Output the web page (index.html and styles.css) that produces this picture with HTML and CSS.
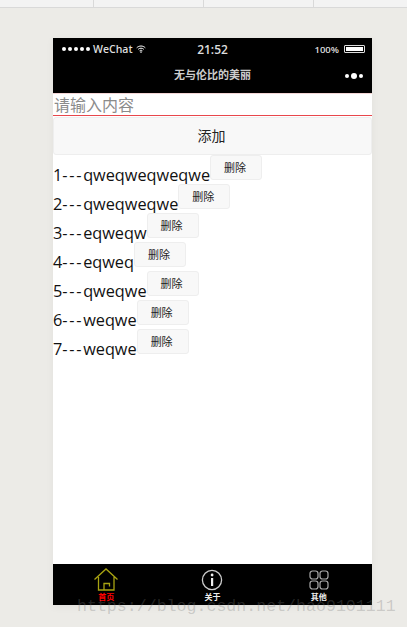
FILE: index.html
```html
<!DOCTYPE html>
<html lang="zh-CN">
<head>
    <meta charset="UTF-8">
    <meta name="viewport" content="width=device-width, initial-scale=1.0">
    <title>无与伦比的美丽</title>
    <link rel="stylesheet" href="styles.css">
</head>
<body>
    <div class="top-tabs">
        <div class="top-tab first"></div>
        <div class="top-tab"></div>
        <div class="top-tab"></div>
        <div class="top-tab"></div>
    </div>

    <div class="phone">
        <div class="status-bar">
            <div class="status-left">
                <span class="signal"><i></i><i></i><i></i><i></i><i></i></span>
                <span>WeChat</span>
                <svg class="wifi" width="10" height="8" viewBox="0 0 10 8">
                    <path d="M.7 2.8C3.2.4 6.8.4 9.3 2.8M2.2 4.3c1.7-1.5 3.9-1.5 5.6 0M3.6 5.8c.9-.7 1.9-.7 2.8 0" fill="none" stroke="#fff" stroke-width="1"/>
                    <circle cx="5" cy="7.1" r=".8" fill="#fff"/>
                </svg>
            </div>
            <div class="status-time">21:52</div>
            <div class="status-right">
                <span>100%</span>
                <span class="battery"><b></b></span>
            </div>
        </div>
        <div class="nav-bar">
            <span class="nav-title">无与伦比的美丽</span>
            <span class="nav-dots"><i></i><i class="big"></i><i></i></span>
        </div>

        <div class="input-row">请输入内容</div>
        <div class="add-btn">添加</div>

        <div class="list">
            <div class="item">1<span class="dash">---</span>qweqweqweqwe<span class="del-btn">删除</span></div>
            <div class="item">2<span class="dash">---</span>qweqweqwe<span class="del-btn">删除</span></div>
            <div class="item">3<span class="dash">---</span>eqweqw<span class="del-btn">删除</span></div>
            <div class="item">4<span class="dash">---</span>eqweq<span class="del-btn">删除</span></div>
            <div class="item">5<span class="dash">---</span>qweqwe<span class="del-btn">删除</span></div>
            <div class="item">6<span class="dash">---</span>weqwe<span class="del-btn">删除</span></div>
            <div class="item">7<span class="dash">---</span>weqwe<span class="del-btn">删除</span></div>
        </div>

        <div class="tab-bar">
            <div class="tab-item active">
                <svg width="26" height="24" viewBox="0 0 26 24">
                    <path d="M1.500 11.500 13 1 24.500 11.500M5.500 9V22H21V9M11 22V15.500H16.500V18.500" fill="none" stroke="#a8a312" stroke-width="1.300"/>
                </svg>
                <span>首页</span>
            </div>
            <div class="tab-item">
                <svg width="22" height="22" viewBox="0 0 22 22">
                    <circle cx="11" cy="11" r="9.600" fill="none" stroke="#ccc" stroke-width="1.300"/>
                    <rect x="10" y="9" width="2.200" height="8" fill="#eee"/>
                    <circle cx="11.100" cy="6" r="1.400" fill="#eee"/>
                </svg>
                <span>关于</span>
            </div>
            <div class="tab-item">
                <svg width="22" height="22" viewBox="0 0 22 22">
                    <rect x="2" y="2" width="8" height="8" rx="2.500" fill="none" stroke="#aaa" stroke-width="1.200"/>
                    <rect x="12" y="2" width="8" height="8" rx="2.500" fill="none" stroke="#aaa" stroke-width="1.200"/>
                    <rect x="2" y="12" width="8" height="8" rx="2.500" fill="none" stroke="#aaa" stroke-width="1.200"/>
                    <rect x="12" y="12" width="8" height="8" rx="2.500" fill="none" stroke="#aaa" stroke-width="1.200"/>
                </svg>
                <span>其他</span>
            </div>
        </div>
    </div>

    <div class="watermark">https://blog.csdn.net/hao9101111</div>
</body>
</html>
```

FILE: styles.css
```css
body {
    margin: 0;
    height: 627px;
    overflow: hidden;
    background-color: #ecebe7;
    font-family: 'Open Sans', 'Noto Sans CJK SC', sans-serif;
}

.top-tabs {
    display: flex;
    height: 7px;
    background: #f3f3f3;
    border-bottom: 1px solid #d9d9d9;
    margin-bottom: 30px;
}

.top-tab {
    flex: 0 0 110px;
    border-left: 1px solid #d9d9d9;
    box-sizing: border-box;
}

.top-tab.first {
    flex-basis: 93px;
    border-left: none;
}

.phone {
    width: 319px;
    height: 567px;
    margin-left: 53px;
    background: white;
    display: flex;
    flex-direction: column;
    box-shadow: 0 2px 8px rgba(0,0,0,0.05);
}

.status-bar {
    height: 22px;
    background: black;
    color: #ddd;
    display: grid;
    grid-template-columns: 1fr auto 1fr;
    align-items: center;
    padding: 0 7px 0 9px;
    font-size: 10.500px;
    font-weight: 600;
}

.status-left {
    display: flex;
    align-items: center;
    gap: 3px;
}

.signal {
    display: flex;
    gap: 2px;
}

.signal i {
    width: 4px;
    height: 4px;
    border-radius: 50%;
    background: white;
}

.status-time {
    font-size: 12px;
    margin-right: 2px;
}

.status-right {
    display: flex;
    justify-content: flex-end;
    align-items: center;
    gap: 5px;
    font-size: 9.500px;
}

.battery {
    width: 21px;
    height: 8px;
    border: 1px solid #ddd;
    box-sizing: border-box;
    padding: 1px;
    border-radius: 1px;
}

.battery b {
    display: block;
    height: 100%;
    background: white;
}

.nav-bar {
    height: 33px;
    padding-bottom: 5px;
    box-sizing: border-box;
    background: black;
    display: flex;
    align-items: center;
    justify-content: center;
    position: relative;
}

.nav-title {
    color: #ccc;
    font-size: 11px;
    font-weight: bold;
}

.nav-dots {
    position: absolute;
    right: 9px;
    top: 13px;
    display: flex;
    align-items: center;
    gap: 2px;
}

.nav-dots i {
    width: 4px;
    height: 4px;
    border-radius: 50%;
    background: white;
}

.nav-dots i.big {
    width: 6px;
    height: 6px;
}

.input-row {
    height: 23px;
    line-height: 23px;
    border-bottom: 1px solid #e8474c;
    border-top: 1px solid #f3d5d5;
    box-sizing: border-box;
    color: #8b8b8b;
    font-size: 16px;
    padding-left: 1px;
}

.add-btn {
    height: 38px;
    line-height: 36px;
    box-sizing: border-box;
    margin-top: 1px;
    padding-right: 2px;
    background: #f8f8f8;
    border: 1px solid #eee;
    border-radius: 3px;
    text-align: center;
    font-size: 14px;
    color: #222;
}

.list {
    flex: 1;
}

.item {
    height: 29px;
    font-size: 16.300px;
    line-height: 38px;
    color: #111;
    white-space: nowrap;
}

.dash {
    letter-spacing: 1.700px;
}

.del-btn {
    display: inline-block;
    width: 52px;
    height: 25px;
    line-height: 23px;
    box-sizing: border-box;
    vertical-align: 9px;
    padding-right: 2px;
    background: #f8f8f8;
    border: 1px solid #eee;
    border-radius: 3px;
    text-align: center;
    font-size: 11px;
    color: #222;
}

.tab-bar {
    height: 41px;
    background: black;
    display: flex;
}

.tab-item {
    flex: 1;
    display: flex;
    flex-direction: column;
    align-items: center;
    color: #eee;
    font-size: 8px;
    font-weight: bold;
    padding-top: 4px;
    line-height: 10px;
}

.tab-item svg {
    display: block;
    height: 24px;
}

.tab-item.active {
    color: #f00;
}

.watermark {
    position: absolute;
    left: 77px;
    top: 597px;
    font-family: 'Liberation Mono', monospace;
    font-size: 16.600px;
    color: rgba(120,120,120,0.3);
    white-space: nowrap;
}
```
